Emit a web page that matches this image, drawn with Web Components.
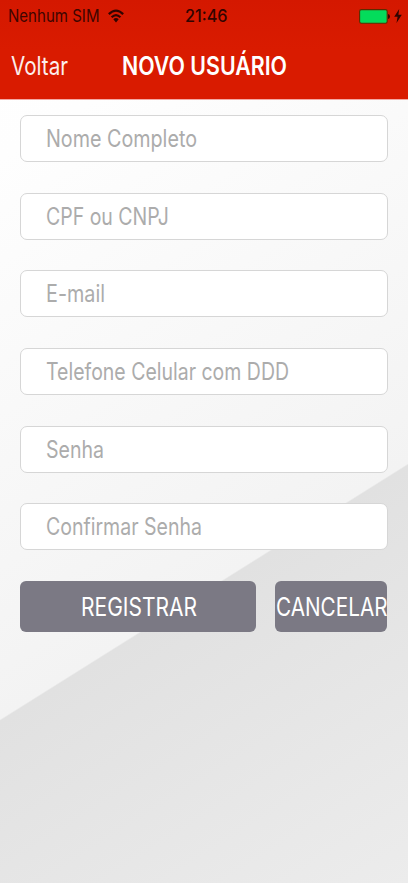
<!DOCTYPE html>
<html lang="pt-BR">
<head>
<meta charset="utf-8">
<title>Novo Usuário</title>
<style>
html, body { margin: 0; height: 100%; overflow: hidden; }
body { font-family: Inter, "Liberation Sans", sans-serif; }
</style>
</head>
<body>
<register-screen></register-screen>
<script>
const define = (name, html, setup) => {
  const template = document.createElement('template');
  template.innerHTML = html;
  customElements.define(name, class extends HTMLElement {
    constructor() {
      super();
      this.attachShadow({ mode: 'open' }).append(template.content.cloneNode(true));
    }
    connectedCallback() { if (setup) setup(this, this.shadowRoot); }
  });
};

/* Condensed single-line label, scaled horizontally to the width in its "w" attribute. */
define('fit-text', `
  <style>
    :host { display: block; flex: none; white-space: nowrap; }
    span { display: inline-block; transform-origin: 0 50%; }
  </style><span><slot></slot></span>`, (host, root) => {
  const w = +host.getAttribute('w');
  const span = root.querySelector('span');
  host.style.width = w + 'px';
  span.style.transform = 'scaleX(' + w / span.getBoundingClientRect().width + ')';
});

define('status-bar', `
  <style>
    :host { display: grid; grid-template-columns: 185px 1fr auto; align-items: center; height: 32px;
      box-sizing: border-box; padding: 0 6px 0 8px; color: #3d0500; font-size: 17px; line-height: 32px; }
    .carrier { display: flex; align-items: center; gap: 8px; }
    .time { font-weight: 500; margin-left: -8px; color: #300400; }
    .power { display: flex; align-items: center; gap: 3px; }
    svg { display: block; }
  </style>
  <div class="carrier"><fit-text w="91.5">Nenhum SIM</fit-text>
    <svg width="16" height="14" viewBox="0 0 16 14" fill="none" stroke="#300400" stroke-width="2.2">
      <path d="M.8 5.1Q8-1.9 15.2 5.1M3.6 8.2Q8 3.9 12.4 8.2"/>
      <path d="M5.3 10.2Q8 7.8 10.7 10.2L8 13.4Z" fill="#300400" stroke="none"/>
    </svg></div>
  <fit-text class="time" w="42.5">21:46</fit-text>
  <div class="power">
    <svg width="32" height="15" viewBox="0 0 32 15">
      <rect x=".6" y=".6" width="27.6" height="13.6" rx="1.8" fill="#04dc5b" stroke="#5c2c00" stroke-width="1.1"/>
      <path d="M29 5q2 .3 2 2.5t-2 2.5z" fill="#3d0500"/>
    </svg>
    <svg width="8" height="14" viewBox="0 0 8 14"><path d="M5.2 0L.2 7.7H3.6L2.5 14L7.8 5.8H4.4Z" fill="#300400"/></svg>
  </div>`);

define('nav-bar', `
  <style>
    :host { display: flex; align-items: center; height: 67px; box-sizing: border-box; padding: 1px 0 0 10.5px;
      color: #fff; font-size: 25px; line-height: 66px; }
    .back { margin-right: 54px; opacity: .93; }
    .title { font-weight: 600; }
  </style>
  <fit-text class="back" w="57">Voltar</fit-text>
  <fit-text class="title" w="165">NOVO USUÁRIO</fit-text>`);

define('text-field', `
  <style>
    :host { display: flex; align-items: center; box-sizing: border-box; height: 47px; padding-left: 25px;
      background: #fff; border: 1px solid #d6d6d6; border-radius: 7px; color: #acacac; font-size: 24px; line-height: 45px; }
  </style><slot></slot>`);

define('action-button', `
  <style>
    :host { display: flex; align-items: center; justify-content: center; box-sizing: border-box; height: 51px;
      border-radius: 6px; background: #7b7984; color: #fff; font-size: 25px; line-height: 50px; padding: 1px 0 0 1px; }
  </style><slot></slot>`);

define('register-screen', `
  <style>
    :host { display: flex; flex-direction: column; height: 100vh;
      background: linear-gradient(147.9deg, #fff 0%, #fefefe 14%, #f3f3f3 63.15%, #e1e1e1 63.3%, #ececec 100%); }
    header { flex: none; height: 100px; background: linear-gradient(#d41800, #d91b00 50%, #d91b00); box-sizing: border-box;
      border-bottom: 1px solid #f3a9a4; background-clip: padding-box; }
    main { padding: 15px 20.4px 0; }
    .fields { display: flex; flex-direction: column; gap: 30.7px; }
    .actions { display: grid; grid-template-columns: 235.6px 112px; gap: 19px; margin-top: 30.8px; }
  </style>
  <header><status-bar></status-bar><nav-bar></nav-bar></header>
  <main>
    <div class="fields">
      <text-field><fit-text w="151">Nome Completo</fit-text></text-field>
      <text-field><fit-text w="123">CPF ou CNPJ</fit-text></text-field>
      <text-field><fit-text w="59">E-mail</fit-text></text-field>
      <text-field><fit-text w="243">Telefone Celular com DDD</fit-text></text-field>
      <text-field><fit-text w="58">Senha</fit-text></text-field>
      <text-field><fit-text w="156">Confirmar Senha</fit-text></text-field>
    </div>
    <div class="actions">
      <action-button><fit-text w="116">REGISTRAR</fit-text></action-button>
      <action-button><fit-text w="111.5">CANCELAR</fit-text></action-button>
    </div>
  </main>`);
</script>
</body>
</html>
